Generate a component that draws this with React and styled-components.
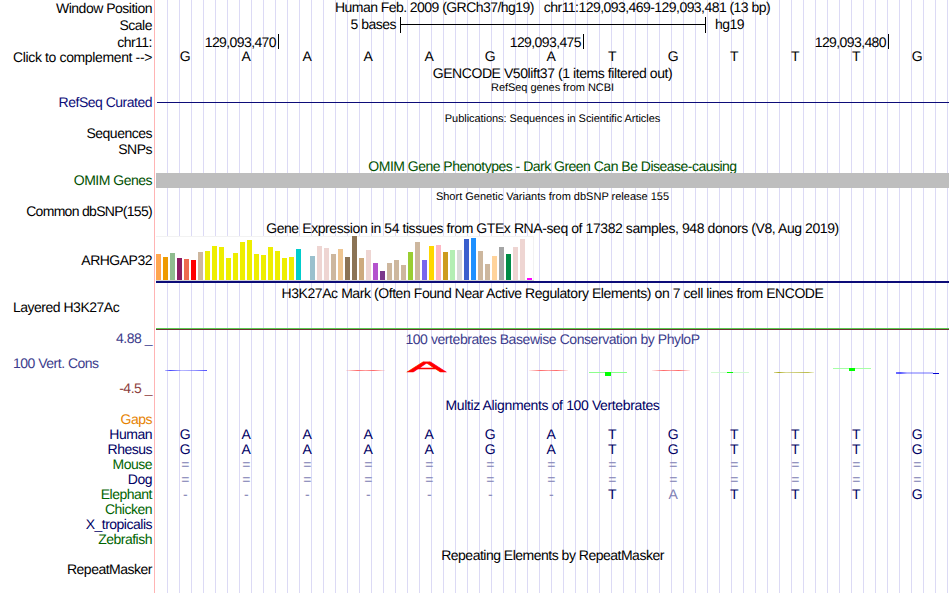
import React from 'react';
import styled, { createGlobalStyle } from 'styled-components';

const GlobalStyle = createGlobalStyle`
  body {
    margin: 0;
    background: #ffffff;
    overflow: hidden;
  }
`;

const Browser = styled.div`
  display: flex;
  width: 950px;
  height: 593px;
  overflow: hidden;
  background-color: #ffffff;
  font-family: "Liberation Sans", Arial, Helvetica, sans-serif;
  font-size: 14px;
  line-height: 15px;
  letter-spacing: -0.5px;
  color: #000000;
  white-space: pre;
  text-rendering: geometricPrecision;
`;

const LabelColumn = styled.div`
  box-sizing: border-box;
  display: flex;
  flex-direction: column;
  align-items: flex-end;
  width: 155px;
  padding: 0 2px 0 13px;
  border-right: 1px solid #ffb4b4;
`;

const Label = styled.div`
  height: 15px;
  margin-top: ${props => props.$gap || 0}px;
  align-self: ${props => (props.$left ? 'flex-start' : 'flex-end')};
  color: ${props => props.$color || '#000000'};
  letter-spacing: ${props => props.$spacing || -0.5}px;
`;

const TrackColumn = styled.div`
  box-sizing: border-box;
  display: flex;
  flex-direction: column;
  width: 794px;
  padding-left: 1px;
  background-image: repeating-linear-gradient(
    to right,
    #ffffff 0,
    #ffffff 11px,
    #dcdaf5 11px,
    #dcdaf5 12px
  );
  background-position: 1px 0;
`;

const TrackTitle = styled.div`
  height: ${props => props.$height || 15}px;
  margin-top: ${props => props.$gap || 0}px;
  text-align: center;
  color: ${props => props.$color || '#000000'};
  letter-spacing: ${props => props.$spacing || -0.5}px;
`;

const SmallTitle = styled(TrackTitle)`
  height: 13px;
  font-size: 11px;
  line-height: 13px;
  letter-spacing: ${props => props.$spacing || 0}px;
`;

const ScaleRow = styled.div`
  display: flex;
  height: 16px;
  margin-top: 2px;
`;

const ScaleText = styled.div`
  width: ${props => props.$width || 'auto'};
  text-align: right;
`;

const ScaleBar = styled.div`
  box-sizing: border-box;
  display: flex;
  align-items: center;
  width: 306px;
  height: 16px;
  margin: 0 9px 0 4px;
  padding-bottom: 1px;
  border-left: 1px solid #000000;
  border-right: 1px solid #000000;

  &::after {
    content: "";
    width: 100%;
    height: 1px;
    background-color: #000000;
  }
`;

const PositionRow = styled.div`
  display: flex;
  height: 15px;
  margin-top: 1px;
  letter-spacing: -0.6px;
`;

const PositionMark = styled.div`
  box-sizing: border-box;
  width: ${props => props.$width}px;
  height: 15px;
  padding-right: 2px;
  border-right: 1px solid #000000;
  line-height: 17px;
  text-align: right;
`;

const BaseRow = styled.div`
  display: grid;
  grid-template-columns: repeat(13, 61px);
  height: 15px;
  margin-top: ${props => props.$gap || 0}px;
  color: ${props => props.$color || '#000000'};
`;

const Base = styled.span`
  padding-right: 3px;
  text-align: center;
  color: ${props => (props.$faded ? '#8080b4' : 'inherit')};
`;

const Rule = styled.div`
  height: ${props => props.$height || 1}px;
  margin-top: ${props => props.$gap || 0}px;
  margin-left: ${props => props.$indent || 0}px;
  background-color: ${props => props.$color};
`;

const ExpressionChart = styled.div`
  box-sizing: border-box;
  display: flex;
  align-items: flex-end;
  gap: 2px;
  width: 378px;
  height: 45px;
  border-bottom: 1px solid #d2d2d2;
  background-color: #ffffff;
  box-shadow: inset 0 1px #f2f2f2, inset -1px 0 #f2f2f2;
`;

const TissueBar = styled.div`
  width: 5px;
  height: ${props => props.$height}px;
  background-color: ${props => props.$color};
`;

const ConservationPlot = styled.svg`
  display: block;
  width: 793px;
  height: 51px;
`;

const NAVY = '#000064';
const GREEN = '#006400';

const labels = [
  { text: 'Window Position', gap: 1 },
  { text: 'Scale', gap: 2 },
  { text: 'chr11:', gap: 2 },
  { text: 'Click to complement -->', spacing: -0.37 },
  { text: 'RefSeq Curated', gap: 30, color: '#0c0c78' },
  { text: 'Sequences', gap: 16 },
  { text: 'SNPs', gap: 1 },
  { text: 'OMIM Genes', gap: 16, color: '#005000' },
  { text: 'Common dbSNP(155)', gap: 16, spacing: -0.7 },
  { text: 'ARHGAP32', gap: 34 },
  { text: 'Layered H3K27Ac', gap: 32, left: true },
  { text: '4.88 _', gap: 16, color: '#3c3c8c' },
  { text: '100 Vert. Cons', gap: 10, color: '#3c3c8c', left: true },
  { text: '-4.5 _', gap: 10, color: '#8c3c3c' },
  { text: 'Gaps', gap: 16, color: '#e68200' },
  { text: 'Human', color: NAVY },
  { text: 'Rhesus', color: NAVY },
  { text: 'Mouse', color: GREEN },
  { text: 'Dog', color: NAVY },
  { text: 'Elephant', color: GREEN },
  { text: 'Chicken', color: GREEN },
  { text: 'X_tropicalis', color: NAVY },
  { text: 'Zebrafish', color: GREEN },
  { text: 'RepeatMasker', gap: 15 },
];

// [height in px, tissue color]
const tissues = [
  [26, '#ffa54f'], [23, '#ee9a00'], [27, '#8fbc8f'], [22, '#8b1c62'], [21, '#ee6a50'],
  [20, '#ff0000'], [28, '#cdb79e'], [29, '#eeee00'], [34, '#eeee00'], [33, '#eeee00'],
  [22, '#eeee00'], [27, '#eeee00'], [38, '#eeee00'], [40, '#eeee00'], [26, '#eeee00'],
  [25, '#eeee00'], [33, '#eeee00'], [29, '#eeee00'], [22, '#eeee00'], [23, '#eeee00'],
  [31, '#00cdcd'], [0, '#ee82ee'], [24, '#9ac0cd'], [34, '#eed5d2'], [32, '#eed5d2'],
  [26, '#cdb79e'], [31, '#eec591'], [23, '#8b7355'], [44, '#8b7355'], [22, '#cdaa7d'],
  [30, '#eed5d2'], [17, '#b452cd'], [9, '#7a378b'], [17, '#cdb79e'], [20, '#cdb79e'],
  [15, '#cdb79e'], [28, '#9acd32'], [38, '#cdb79e'], [20, '#7a67ee'], [34, '#ffd700'],
  [35, '#ffb6c1'], [28, '#cd9b1d'], [30, '#b4eeb4'], [30, '#d9d9d9'], [41, '#3a5fcd'],
  [42, '#1e90ff'], [29, '#cdb79e'], [16, '#cdb79e'], [24, '#ffd39b'], [33, '#a6a6a6'],
  [26, '#008b45'], [33, '#eed5d2'], [41, '#eed5d2'], [2, '#ff00ff'],
];

const Bases = ({ sequence, gap, color, faded = '' }) => (
  <BaseRow $gap={gap} $color={color}>
    {sequence.split('').map((base, i) => (
      <Base key={i} $faded={faded[i] === 'x' || base === '=' || base === '-'}>{base}</Base>
    ))}
  </BaseRow>
);

const Conservation = () => (
  <ConservationPlot viewBox="156 347 793 51" shapeRendering="crispEdges">
    <defs>
      <linearGradient id="redLine">
        <stop offset="0" stopColor="#ff5050" stopOpacity="0.1" />
        <stop offset="0.3" stopColor="#ff5050" stopOpacity="0.85" />
        <stop offset="0.5" stopColor="#ff5050" stopOpacity="0.55" />
        <stop offset="0.7" stopColor="#ff5050" stopOpacity="0.85" />
        <stop offset="1" stopColor="#ff5050" stopOpacity="0.1" />
      </linearGradient>
      <linearGradient id="blueLine">
        <stop offset="0" stopColor="#3232ff" stopOpacity="0.3" />
        <stop offset="0.12" stopColor="#3232ff" stopOpacity="0.9" />
        <stop offset="0.4" stopColor="#3232ff" stopOpacity="0.35" />
        <stop offset="0.7" stopColor="#3232ff" stopOpacity="0.5" />
        <stop offset="1" stopColor="#3232ff" stopOpacity="0.85" />
      </linearGradient>
      <linearGradient id="blueTail">
        <stop offset="0" stopColor="#3232ff" stopOpacity="0.7" />
        <stop offset="0.12" stopColor="#3232ff" stopOpacity="0.8" />
        <stop offset="0.3" stopColor="#3232ff" stopOpacity="0.35" />
        <stop offset="1" stopColor="#3232ff" stopOpacity="0.35" />
      </linearGradient>
      <linearGradient id="oliveLine">
        <stop offset="0" stopColor="#b4b432" stopOpacity="0.5" />
        <stop offset="0.12" stopColor="#a0a000" stopOpacity="0.9" />
        <stop offset="0.3" stopColor="#b4b432" stopOpacity="0.5" />
        <stop offset="0.85" stopColor="#a0a000" stopOpacity="0.7" />
        <stop offset="1" stopColor="#b4b432" stopOpacity="0.2" />
      </linearGradient>
    </defs>
    <rect x="165" y="370" width="42" height="1" fill="url(#blueLine)" />
    <rect x="346" y="370" width="39" height="1" fill="url(#redLine)" />
    <text
      transform="translate(426.7 371.8) scale(3.9 1)"
      fontSize="15"
      letterSpacing="0"
      textAnchor="middle"
      fill="#ff0000"
      stroke="#ff0000"
      strokeWidth="0.35"
    >
      A
    </text>
    <rect x="529" y="370" width="39" height="1" fill="url(#redLine)" />
    <rect x="589" y="372" width="38" height="1" fill="#8cff8c" />
    <rect x="605" y="372" width="6" height="4" fill="#00ff00" />
    <rect x="652" y="370" width="38" height="1" fill="url(#redLine)" />
    <rect x="711" y="372" width="38" height="1" fill="#d2fad2" />
    <rect x="727" y="372" width="6" height="1" fill="#00ff00" />
    <rect x="774" y="372" width="40" height="1" fill="url(#oliveLine)" />
    <rect x="833" y="368" width="38" height="1" fill="#a5ffa5" />
    <rect x="849" y="368" width="6" height="3" fill="#00ff00" />
    <rect x="896" y="372" width="37" height="1" fill="url(#blueTail)" />
    <rect x="896" y="373" width="37" height="1" fill="url(#blueTail)" />
    <rect x="933" y="373" width="6" height="1" fill="#0000d2" />
  </ConservationPlot>
);

const App = () => {
  return (
    <Browser>
      <GlobalStyle />
      <LabelColumn>
        {labels.map(label => (
          <Label
            key={label.text}
            $gap={label.gap}
            $color={label.color}
            $left={label.left}
            $spacing={label.spacing}
          >
            {label.text}
          </Label>
        ))}
      </LabelColumn>

      <TrackColumn>
        <TrackTitle $spacing={-0.55}>
          {'Human Feb. 2009 (GRCh37/hg19)   chr11:129,093,469-129,093,481 (13 bp)'}
        </TrackTitle>
        <ScaleRow>
          <ScaleText $width="240px">5 bases</ScaleText>
          <ScaleBar />
          <ScaleText>hg19</ScaleText>
        </ScaleRow>
        <PositionRow>
          <PositionMark $width={123}>129,093,470</PositionMark>
          <PositionMark $width={305}>129,093,475</PositionMark>
          <PositionMark $width={305}>129,093,480</PositionMark>
        </PositionRow>
        <Bases sequence="GAAAAGATGTTTG" />

        <TrackTitle $gap={2} $spacing={-0.43}>GENCODE V50lift37 (1 items filtered out)</TrackTitle>
        <SmallTitle $gap={1} $spacing={-0.05}>RefSeq genes from NCBI</SmallTitle>
        <Rule $gap={7} $indent={1} $color="#0c0c78" />

        <SmallTitle $gap={10} $spacing={-0.05}>Publications: Sequences in Scientific Articles</SmallTitle>

        <TrackTitle $gap={33} $height={14} $color="#005000" $spacing={-0.51}>
          OMIM Gene Phenotypes - Dark Green Can Be Disease-causing
        </TrackTitle>
        <Rule $height={15} $color="#bebebe" />

        <SmallTitle $gap={3}>Short Genetic Variants from dbSNP release 155</SmallTitle>

        <TrackTitle $gap={17} $spacing={-0.42}>
          Gene Expression in 54 tissues from GTEx RNA-seq of 17382 samples, 948 donors (V8, Aug 2019)
        </TrackTitle>
        <ExpressionChart>
          {tissues.map(([height, color], i) => (
            <TissueBar key={i} $height={height} $color={color} />
          ))}
        </ExpressionChart>
        <Rule $height={2} $color="#0c0c78" />

        <TrackTitle $gap={3} $spacing={-0.43}>
          H3K27Ac Mark (Often Found Near Active Regulatory Elements) on 7 cell lines from ENCODE
        </TrackTitle>
        <Rule $gap={27} $color="#5ac850" />
        <Rule $color="#6b3232" />

        <TrackTitle $gap={2} $color="#3c3c8c" $spacing={-0.43}>
          100 vertebrates Basewise Conservation by PhyloP
        </TrackTitle>
        <Conservation />

        <TrackTitle $color={NAVY} $spacing={-0.37}>Multiz Alignments of 100 Vertebrates</TrackTitle>
        <Bases gap={14} color={NAVY} sequence="GAAAAGATGTTTG" />
        <Bases color={NAVY} sequence="GAAAAGATGTTTG" />
        <Bases color={NAVY} sequence="=============" />
        <Bases color={NAVY} sequence="=============" />
        <Bases color={NAVY} sequence="-------TATTTG" faded="        x    " />

        <TrackTitle $gap={46}>Repeating Elements by RepeatMasker</TrackTitle>
      </TrackColumn>
    </Browser>
  );
};

export default App;
